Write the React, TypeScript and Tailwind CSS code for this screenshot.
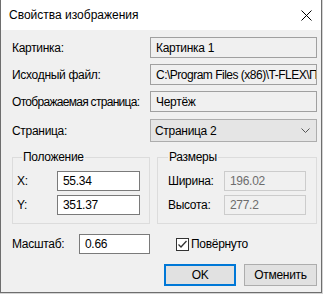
import React from "react";

const font = { fontFamily: '"Segoe UI", "Liberation Sans", Arial, sans-serif' };

function Box({ children, className = "" }: { children?: React.ReactNode; className?: string }) {
  return (
    <div className={`flex items-center overflow-hidden whitespace-nowrap border px-[5px] text-[12px] ${className}`}>
      {children}
    </div>
  );
}

export default function App() {
  return (
    <div className="h-[294px] w-[323px] bg-[#d4d4d4]" style={font}>
      <div className="flex h-[293px] w-[322px] flex-col border-x border-b border-[#6e6e6e] bg-[#f0f0f0] text-[12px] text-black">
        {/* Title bar */}
        <div className="flex h-[30px] shrink-0 items-center justify-between bg-white pl-[8px] pr-[8px]">
          <span className="text-[12px]">Свойства изображения</span>
          <svg width="11" height="11" viewBox="0 0 11 11" className="mr-[1px]">
            <path d="M0.5 0.5 L10.5 10.5 M10.5 0.5 L0.5 10.5" stroke="#000" strokeWidth="1" />
          </svg>
        </div>

        <div className="flex flex-col whitespace-nowrap pl-[11px] pr-[4px] pt-[7px] tracking-[-0.3px]">
          <div className="flex h-[21px] items-center">
            <span className="w-[138px]">Картинка:</span>
            <Box className="h-[21px] flex-1 border-[#a0a0a0] bg-[#f0f0f0]">Картинка 1</Box>
          </div>
          <div className="mt-[6px] flex h-[21px] items-center">
            <span className="w-[138px]">Исходный файл:</span>
            <Box className="h-[21px] w-[167px] border-[#a0a0a0] bg-[#f0f0f0] tracking-[-0.5px]">C:\Program Files (x86)\T-FLEX\Пр</Box>
          </div>
          <div className="mt-[6px] flex h-[21px] items-center">
            <span className="w-[138px] tracking-[-0.7px]">Отображаемая страница:</span>
            <Box className="h-[21px] flex-1 border-[#a0a0a0] bg-[#f0f0f0]">Чертёж</Box>
          </div>
          <div className="mt-[7px] flex h-[23px] items-center">
            <span className="w-[138px]">Страница:</span>
            <div className="flex h-[23px] flex-1 items-center justify-between border border-[#adadad] bg-[#e5e5e5] pl-[4px] pr-[6px]">
              <span>Страница 2</span>
              <svg width="9" height="5" viewBox="0 0 9 5">
                <path d="M0.5 0.5 L4.5 4.5 L8.5 0.5" stroke="#555" strokeWidth="1" fill="none" />
              </svg>
            </div>
          </div>

          {/* Group boxes */}
          <div className="mt-[8px] flex gap-[7px]">
            <fieldset className="h-[74px] w-[138px] border border-[#dcdcdc] pl-[4px] pr-[9px]">
              <legend className="ml-[5px] px-[1px] leading-[14px]">Положение</legend>
              <div className="mt-[7px] flex h-[20px] items-center">
                <span className="w-[40px]">X:</span>
                <Box className="h-[20px] flex-1 border-[#7a7a7a] bg-white">55.34</Box>
              </div>
              <div className="mt-[4px] flex h-[20px] items-center">
                <span className="w-[40px]">Y:</span>
                <Box className="h-[20px] flex-1 border-[#7a7a7a] bg-white">351.37</Box>
              </div>
            </fieldset>
            <fieldset className="h-[74px] flex-1 border border-[#dcdcdc] pl-[10px] pr-[10px]">
              <legend className="px-[1px] leading-[14px]">Размеры</legend>
              <div className="mt-[7px] flex h-[20px] items-center">
                <span className="w-[56px]">Ширина:</span>
                <Box className="h-[20px] flex-1 border-[#cccccc] bg-[#f0f0f0] text-[#6d6d6d]">196.02</Box>
              </div>
              <div className="mt-[4px] flex h-[20px] items-center">
                <span className="w-[56px]">Высота:</span>
                <Box className="h-[20px] flex-1 border-[#cccccc] bg-[#f0f0f0] text-[#6d6d6d]">277.2</Box>
              </div>
            </fieldset>
          </div>

          {/* Scale row */}
          <div className="mt-[10px] flex h-[20px] items-center">
            <span className="w-[67px]">Масштаб:</span>
            <Box className="h-[20px] w-[71px] border-[#7a7a7a] bg-white">0.66</Box>
            <div className="ml-[26px] flex items-center">
              <div className="flex h-[13px] w-[13px] items-center justify-center border border-[#333] bg-white">
                <svg width="11" height="11" viewBox="0 0 11 11">
                  <path d="M1.5 5.5 L4 8 L9.5 2" stroke="#333" strokeWidth="1.3" fill="none" />
                </svg>
              </div>
              <span className="ml-[2px]">Повёрнуто</span>
            </div>
          </div>

          {/* Buttons */}
          <div className="mt-[10px] flex justify-end gap-[8px]">
            <button className="h-[22px] w-[72px] border-2 border-[#0078d7] bg-[#e1e1e1] text-[12px]">OK</button>
            <button className="h-[22px] w-[73px] border border-[#adadad] bg-[#e1e1e1] text-[12px]">Отменить</button>
          </div>
        </div>
      </div>
    </div>
  );
}
